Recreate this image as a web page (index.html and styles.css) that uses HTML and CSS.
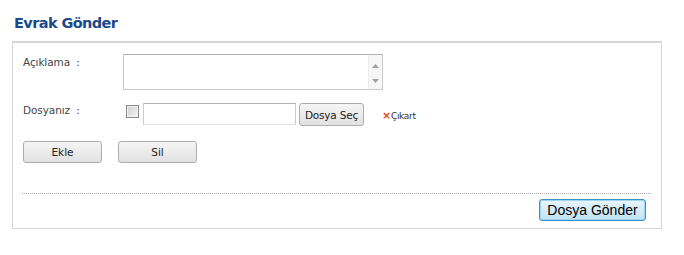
FILE: index.html
```html
<!DOCTYPE html>
<html lang="tr">
<head>
<meta charset="utf-8">
<link rel="stylesheet" href="styles.css">
</head>
<body>
<h2 class="title">Evrak Gönder</h2>
<div class="panel">
  <div class="row row-desc">
    <label class="lbl">Açıklama <span class="colon">:</span></label>
    <div class="field">
      <div class="textarea">
        <div class="scroll">
          <svg width="7" height="4" viewBox="0 0 7 4"><path d="M0 4 L3.5 0 L7 4Z" fill="#a0a0a0"/></svg>
          <svg width="7" height="4" viewBox="0 0 7 4"><path d="M0 0 L3.5 4 L7 0Z" fill="#a0a0a0"/></svg>
        </div>
      </div>
    </div>
  </div>
  <div class="row row-file">
    <label class="lbl">Dosyanız <span class="colon">:</span></label>
    <div class="field file-field">
      <span class="chk"></span>
      <span class="txt"></span>
      <button class="btn btn-sec">Dosya Seç</button>
      <span class="remove"><span class="x">×</span>Çıkart</span>
    </div>
  </div>
  <div class="actions">
    <button class="btn btn-wide">Ekle</button>
    <button class="btn btn-wide">Sil</button>
  </div>
  <div class="divider"></div>
  <div class="footer">
    <button class="btn-send">Dosya Gönder</button>
  </div>
</div>
</body>
</html>
```

FILE: styles.css
```css
html, body {
  margin: 0;
  padding: 0;
  background: #fff;
}
body {
  font-family: "DejaVu Sans", sans-serif;
  font-size: 11px;
  color: #333;
  width: 684px;
  height: 255px;
}
.title {
  margin: 0;
  padding: 14px 0 0 14px;
  height: 27px;
  font-family: "DejaVu Sans", sans-serif;
  font-size: 14.5px;
  font-weight: bold;
  color: #1a4a8a;
  line-height: 19px;
  letter-spacing: -0.6px;
}
.panel {
  margin-left: 12px;
  width: 648px;
  height: 185px;
  border: 1px solid #d6d6d6;
  border-top: 2px solid #d6d6d6;
  box-sizing: content-box;
  display: flex;
  flex-direction: column;
}
.row {
  display: flex;
  padding-left: 10px;
}
.lbl {
  width: 100px;
  color: #444;
  font-family: "DejaVu Sans", sans-serif;
  font-size: 10.5px;
  letter-spacing: -0.1px;
}
.colon {
  margin-left: 3px;
}
.row-desc {
  padding-top: 11px;
}
.row-desc .lbl {
  padding-top: 2px;
}
.textarea {
  width: 258px;
  height: 34px;
  border: 1px solid #c9c9c9;
  border-top-color: #b3b3b3;
  display: flex;
  justify-content: flex-end;
}
.scroll {
  width: 14px;
  border-left: 1px solid #ececec;
  display: flex;
  flex-direction: column;
  justify-content: space-between;
  align-items: center;
  padding: 9px 0 6px;
  box-sizing: border-box;
  background: #f7f7f7;
}
.row-file {
  padding-top: 13px;
}
.row-file .lbl {
  padding-top: 1px;
}
.file-field {
  display: flex;
  align-items: flex-start;
}
.chk {
  width: 11px;
  height: 11px;
  margin: 2px 0 0 3px;
  border: 1px solid #8a8a8a;
  background: linear-gradient(135deg, #cfcfcf, #f6f6f6);
  box-shadow: inset 0 0 0 1px #f2f2f2;
}
.txt {
  width: 151px;
  height: 20px;
  margin-left: 4px;
  border: 1px solid #ccc;
  border-top-color: #b0b0b0;
  border-bottom-color: #e2e2e2;
}
.btn {
  font-family: "DejaVu Sans", sans-serif;
  font-size: 10.5px;
  color: #222;
  border: 1px solid #adadad;
  border-radius: 3px;
  background: linear-gradient(#f5f5f5, #e1e1e1);
  padding: 0;
  height: 22px;
}
.btn-sec {
  width: 65px;
  margin-left: 3px;
  height: 23px;
  letter-spacing: -0.2px;
}
.remove {
  margin: 6px 0 0 18px;
  font-family: "DejaVu Sans", sans-serif;
  font-size: 9px;
  color: #333;
  letter-spacing: -0.3px;
}
.remove .x {
  color: #e8431a;
  font-weight: bold;
  font-size: 11px;
}
.actions {
  display: flex;
  gap: 16px;
  padding: 15px 0 0 10px;
}
.btn-wide {
  width: 79px;
}
.divider {
  margin: 30px 10px 0 9px;
  border-top: 1px dotted #aaa;
}
.footer {
  display: flex;
  justify-content: flex-end;
  padding: 5px 15px 0 0;
}
.btn-send {
  font-family: "Liberation Sans", Arial, sans-serif;
  font-size: 14px;
  color: #000;
  width: 107px;
  height: 22px;
  padding: 0;
  line-height: 18px;
  border: 1px solid #3c90c8;
  border-radius: 3px;
  background: linear-gradient(#e9f5fd, #bfe2f7);
  box-shadow: inset 0 0 0 1px #9fd4f2;
}
```
